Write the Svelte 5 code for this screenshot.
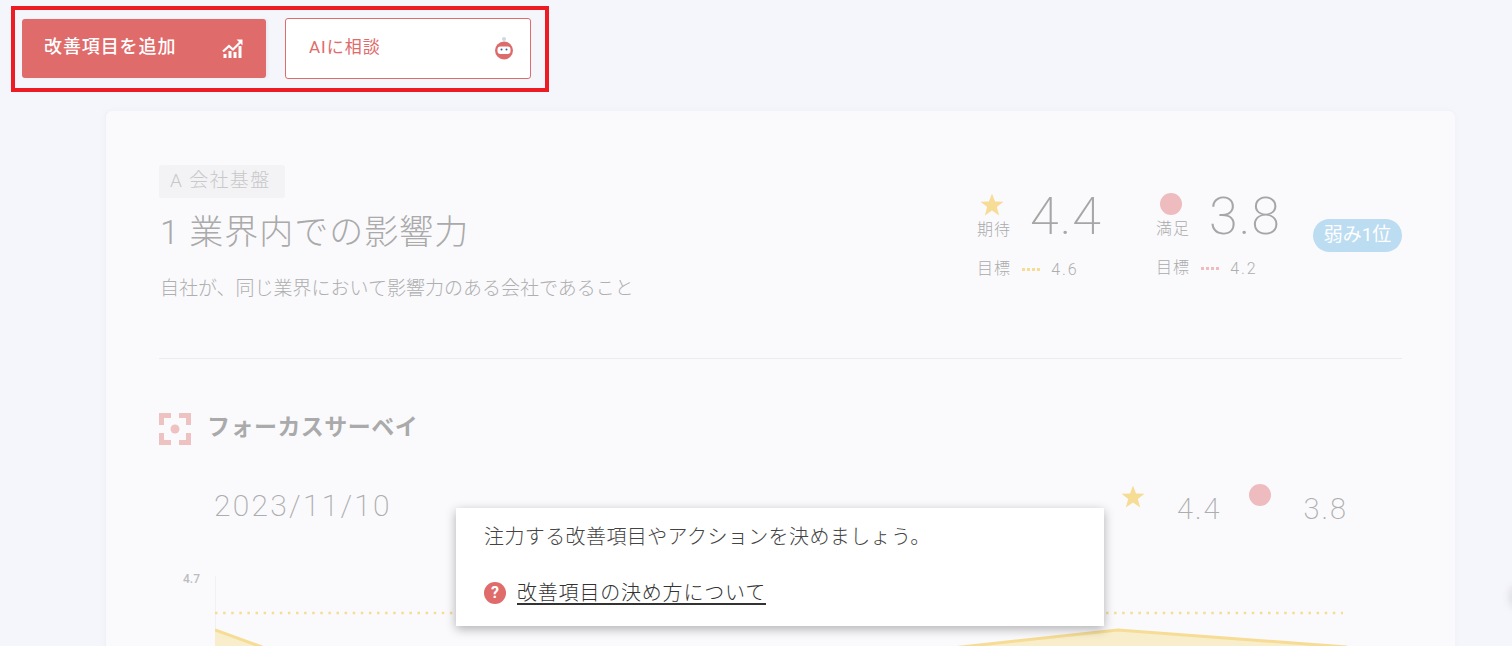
<script>
  const stats = [
    { kind: 'star', label: '期待', value: '4.4', target: '4.6' },
    { kind: 'circle', label: '満足', value: '3.8', target: '4.2' }
  ];
</script>

<div class="page">
  <div class="toolbar">
    <div class="frame">
      <button class="btn primary">
        <span class="btn-text">改善項目を追加</span>
        <svg width="22" height="22" viewBox="0 0 22 22" fill="#fff">
          <rect x="1.5" y="17" width="3" height="4" />
          <rect x="6.5" y="14" width="3" height="7" />
          <rect x="11.5" y="15" width="3" height="6" />
          <rect x="16.5" y="9" width="3" height="12" />
          <path d="M1 14.5 L7 9 L11 12.5 L18 5.5" fill="none" stroke="#fff" stroke-width="2.2" />
          <path d="M14.5 2.5 H20.5 V8.5 Z" />
        </svg>
      </button>
      <button class="btn outline">
        <span class="btn-text">AIに相談</span>
        <svg width="18" height="23" viewBox="0 0 18 23">
          <circle cx="9" cy="2" r="2" fill="#cfd8e0" />
          <circle cx="9" cy="13.5" r="9" fill="#dd6b6b" />
          <rect x="2.5" y="9.5" width="13" height="7.5" rx="3" fill="#fff" />
          <circle cx="6.5" cy="12.5" r="1" fill="#3c5f8f" />
          <circle cx="11.5" cy="12.5" r="1" fill="#3c5f8f" />
        </svg>
      </button>
    </div>
  </div>

  <main class="card">
    <section class="head">
      <div class="intro">
        <span class="tag">A 会社基盤</span>
        <h1>1 業界内での影響力</h1>
        <p>自社が、同じ業界において影響力のある会社であること</p>
      </div>
      <div class="stats">
        {#each stats as s}
          <div class="stat">
            <div class="stat-top">
              <div class="mark">
                {#if s.kind === 'star'}
                  <svg class="glyph" width="24" height="23" viewBox="0 0 24 23"><path d="M12 0.5 L15 8.5 L23.5 8.8 L16.8 14 L19.2 22.5 L12 17.6 L4.8 22.5 L7.2 14 L0.5 8.8 L9 8.5 Z" fill="#f6dc95" /></svg>
                {:else}
                  <span class="dot m-dot"></span>
                {/if}
                <span class="lbl top-lbl">{s.label}</span>
              </div>
              <span class="big">{s.value}</span>
            </div>
            <div class="target">
              <span class="lbl">目標</span>
              <span class="dots {s.kind}"></span>
              <span class="tv">{s.target}</span>
            </div>
          </div>
        {/each}
        <span class="badge">弱み1位</span>
      </div>
    </section>

    <section class="survey">
      <h2>
        <svg width="32" height="32" viewBox="0 0 32 32" fill="none" stroke="#efc2c2" stroke-width="5">
          <path d="M12 2.5 H2.5 V12 M20 2.5 H29.5 V12 M2.5 20 V29.5 H12 M29.5 20 V29.5 H20" />
          <circle cx="16" cy="16" r="4.5" fill="#efc2c2" stroke="none" />
        </svg>
        <span class="h-text">フォーカスサーベイ</span>
      </h2>
      <div class="row">
        <span class="date">2023/11/10</span>
        <div class="scores">
          <svg class="s-star" width="24" height="23" viewBox="0 0 24 23"><path d="M12 0.5 L15 8.5 L23.5 8.8 L16.8 14 L19.2 22.5 L12 17.6 L4.8 22.5 L7.2 14 L0.5 8.8 L9 8.5 Z" fill="#f6dc95" /></svg>
          <span class="sv">4.4</span>
          <span class="dot s-dot"></span>
          <span class="sv">3.8</span>
        </div>
      </div>
      <div class="chart">
        <span class="tick">4.7</span>
        <svg class="plot" width="1134" height="90" viewBox="0 0 1134 90">
          <line x1="0.5" y1="0" x2="0.5" y2="90" stroke="#f1f1f4" />
          <path d="M0 54 L47 71 L47 90 L0 90 Z" fill="#f8eecb" />
          <path d="M700 76 L903 54 L1132 71 L1132 90 L700 90 Z" fill="#f8eecb" />
          <line x1="0" y1="37" x2="1128" y2="37" stroke="#f6dc95" stroke-width="2.5" stroke-dasharray="2.5 5.6" />
          <path d="M0 54 L47 71 M700 76 L903 54 L1132 71" fill="none" stroke="#f6dc95" stroke-width="3" />
        </svg>
      </div>
    </section>
  </main>

  <aside class="popup">
    <p>注力する改善項目やアクションを決めましょう。</p>
    <div class="help">
      <span class="q">?</span>
      <a href="#how">改善項目の決め方について</a>
    </div>
  </aside>
  <span class="edge"></span>
</div>

<style>
  :global(body) {
    margin: 0;
    background: #f5f6fb;
  }
  .page {
    position: relative;
    height: 646px;
    overflow: hidden;
    font-family: Roboto, "Noto Sans CJK JP", sans-serif;
    background: #f5f6fb;
    color: #aaa;
  }
  .toolbar {
    padding: 6px 0 0 11px;
    height: 111px;
    box-sizing: border-box;
  }
  .frame {
    display: inline-flex;
    align-items: center;
    gap: 19px;
    box-sizing: border-box;
    width: 538px;
    height: 86px;
    padding: 0 14px 2px 7px;
    border: 4px solid #ed1c24;
  }
  .btn {
    display: flex;
    align-items: center;
    justify-content: space-between;
    box-sizing: border-box;
    font-family: inherit;
    cursor: pointer;
  }
  .btn-text { margin-bottom: 6px; }
  .btn.primary {
    width: 244px;
    height: 59px;
    padding: 0 22px;
    background: #df6b6b;
    border: 0;
    border-radius: 3px;
    box-shadow: 2px 0 3px #e9ebf1;
    color: #fff;
    font-size: 18px;
    font-weight: 500;
    letter-spacing: 0.05em;
  }
  .btn.outline {
    width: 246px;
    height: 61px;
    padding: 0 17px 0 23px;
    background: #fff;
    border: 1.5px solid #df6b6b;
    border-radius: 3px;
    color: #df6b6b;
    font-size: 17px;
    letter-spacing: 0.06em;
  }
  .card {
    box-sizing: border-box;
    width: 1349px;
    height: 600px;
    margin-left: 106px;
    padding: 54px 53px 0 53px;
    background: #fafafd;
    border-radius: 6px;
    box-shadow: -1px 0 4px rgba(230, 232, 240, 0.5);
  }
  .head {
    display: flex;
    justify-content: space-between;
    height: 193px;
    border-bottom: 1px solid #ececef;
    box-sizing: content-box;
  }
  .intro {
    display: flex;
    flex-direction: column;
    align-items: flex-start;
  }
  .tag {
    box-sizing: border-box;
    height: 33px;
    width: 126px;
    padding: 0 11px;
    background: #f3f3f5;
    border-radius: 3px;
    color: #c8c8c8;
    font-size: 19px;
    font-weight: 300;
    line-height: 31px;
    letter-spacing: 0.07em;
    white-space: nowrap;
  }
  h1 {
    margin: 13px 0 0 1px;
    font-size: 34px;
    font-weight: 300;
    line-height: 42px;
    letter-spacing: 0.03em;
    color: #aaa;
    white-space: nowrap;
  }
  .intro p {
    margin: 23px 0 0 1px;
    font-size: 19px;
    font-weight: 300;
    line-height: 26px;
    color: #afafaf;
    white-space: nowrap;
  }
  .stats {
    display: flex;
    align-items: flex-start;
    padding-top: 27px;
  }
  .stat {
    width: 179px;
    display: flex;
    flex-direction: column;
  }
  .stat-top {
    display: flex;
    align-items: flex-start;
    gap: 19px;
  }
  .mark {
    width: 34px;
    display: flex;
    flex-direction: column;
    align-items: flex-start;
    padding-top: 1px;
  }
  .glyph { display: block; margin-left: 3px; }
  .dot {
    display: block;
    width: 22px;
    height: 22px;
    border-radius: 50%;
    background: #eebcbf;
  }
  .m-dot { margin-left: 4px; }
  .lbl {
    font-size: 16px;
    line-height: 22px;
    font-weight: 300;
    letter-spacing: 0.07em;
    color: #aaa;
    white-space: nowrap;
  }
  .top-lbl { margin-top: 3px; }
  .big {
    font-size: 52px;
    font-weight: 200;
    line-height: 46px;
    margin-top: 2px;
    letter-spacing: 0.02em;
    color: #a6a6a6;
  }
  .target {
    display: flex;
    align-items: center;
    margin-top: 17px;
    height: 22px;
  }
  .dots {
    width: 18px;
    margin: 0 11px 0 11px;
    height: 3px;
    background: repeating-linear-gradient(90deg, #f6dc95 0 3px, transparent 3px 5px);
  }
  .dots.circle {
    background: repeating-linear-gradient(90deg, #eebcbf 0 3px, transparent 3px 5px);
  }
  .tv {
    font-size: 16px;
    font-weight: 300;
    letter-spacing: 0.12em;
    color: #aeaeae;
  }
  .badge {
    box-sizing: border-box;
    width: 89px;
    height: 33px;
    margin: 27px 0 0 -22px;
    border-radius: 17px;
    background: #bcdcf1;
    color: #fff;
    font-size: 19px;
    line-height: 32px;
    text-align: center;
    white-space: nowrap;
  }
  .survey { padding-top: 54px; }
  h2 {
    display: flex;
    align-items: center;
    gap: 16px;
    margin: 0;
    height: 32px;
    font-size: 23px;
    font-weight: 700;
    letter-spacing: 0.02em;
    color: #aaa;
  }
  .h-text { margin-top: -8px; }
  .row {
    display: flex;
    justify-content: space-between;
    align-items: flex-start;
    margin: 39px 54px 0 55px;
    height: 50px;
  }
  .date {
    font-size: 30px;
    font-weight: 200;
    line-height: 44px;
    letter-spacing: 0.075em;
    color: #adadad;
  }
  .scores {
    display: flex;
    align-items: flex-start;
  }
  .s-star { margin-top: 1px; }
  .sv {
    font-size: 29px;
    font-weight: 200;
    letter-spacing: 0.07em;
    line-height: 40px;
    margin: 5px 0 0 32px;
    color: #adadad;
  }
  .s-dot { margin-left: 28px; }
  .sv + .s-dot + .sv { margin-left: 32px; }
  .chart {
    display: flex;
    align-items: flex-start;
    margin-top: 42px;
    margin-left: 24px;
    gap: 11px;
  }
  .tick {
    width: 21px;
    margin-top: -5px;
    font-size: 12px;
    font-weight: 500;
    line-height: 16px;
    color: #bdbdbd;
  }
  .plot { display: block; overflow: hidden; }
  .popup {
    position: absolute;
    left: 456px;
    top: 508px;
    box-sizing: border-box;
    width: 648px;
    height: 118px;
    padding: 13px 28px 0;
    background: #fff;
    box-shadow: 0 3px 10px rgba(0, 0, 0, 0.3);
    color: #444;
  }
  .popup p {
    margin: 0;
    font-size: 20px;
    font-weight: 300;
    line-height: 30px;
    letter-spacing: 0.02em;
    white-space: nowrap;
    font-family: "Noto Sans CJK JP", sans-serif;
  }
  .help {
    display: flex;
    align-items: center;
    gap: 11px;
    margin-top: 29px;
  }
  .q {
    width: 22px;
    height: 22px;
    border-radius: 50%;
    background: #df6b6b;
    color: #fff;
    font-size: 16px;
    font-weight: 700;
    line-height: 22px;
    text-align: center;
  }
  .help a {
    font-size: 20px;
    font-weight: 300;
    line-height: 26px;
    letter-spacing: 0.04em;
    color: #333;
    text-decoration: underline;
    text-underline-offset: 3px;
  }
  .edge {
    position: absolute;
    right: -20px;
    top: 584px;
    width: 24px;
    height: 26px;
    border-radius: 50%;
    background: #e2e2e8;
    filter: blur(3px);
  }
</style>
